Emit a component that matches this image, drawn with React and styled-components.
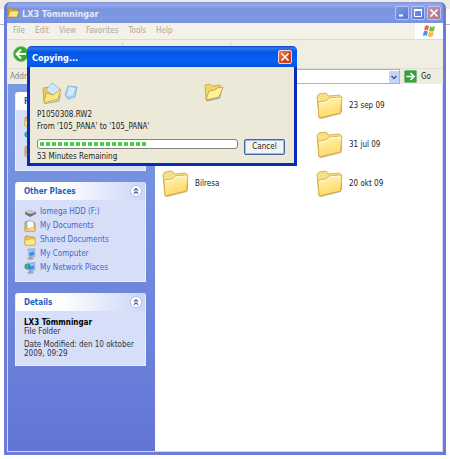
import React from "react";
import styled, { createGlobalStyle } from "styled-components";

const Global = createGlobalStyle`
  * { box-sizing: border-box; }
  body { margin: 0; }
  body, button, input {
    font-family: "DejaVu Sans Condensed", "DejaVu Sans", "Noto Sans", sans-serif;
    font-size: 8px;
    line-height: 10px;
    color: #222;
  }
`;

const Desktop = styled.div`
  position: relative;
  min-height: 100vh;
  padding: 2px 4px 4px;
  display: flex;
  background: linear-gradient(#edebe2 0 9px, #fff 9px 24px, #a9b5c8 24px 25px, #fff 25px);
`;

const ExplorerWindow = styled.main`
  flex: 1;
  min-width: 0;
  display: flex;
  flex-direction: column;
  border: 3px solid #6d7bd9;
  border-top: 0;
  border-radius: 6px 6px 0 0;
  background: #7a96e0;
`;

const TitleBar = styled.header`
  height: 21px;
  flex: none;
  display: flex;
  align-items: center;
  gap: 2px;
  padding-right: 2px;
  border-radius: 6px 6px 0 0;
  background: linear-gradient(#8795dc 0, #94aaec 3px, #7b94df 7px, #7e9ae4 16px, #7b90dc 100%);
`;

const WindowTitle = styled.h1`
  flex: 1;
  margin: 0;
  padding-top: 2px;
  font-size: 9px;
  line-height: 12px;
  color: #e3eafb;
`;

const CaptionButton = styled.button`
  width: 14px;
  height: 14px;
  padding: 0;
  display: grid;
  place-items: center;
  border: 1px solid ${(p) => (p.$live ? "#f6d5cb" : "#b5c4f2")};
  border-radius: 2px;
  background: ${(p) =>
    p.$live
      ? "linear-gradient(135deg, #f08a68, #dc4622 50%, #c93a17)"
      : p.$close
      ? "linear-gradient(135deg, #c493a9, #af7087)"
      : "linear-gradient(135deg, #7c98e9, #5476d8)"};
`;

const MenuBar = styled.nav`
  height: 17px;
  flex: none;
  display: flex;
  align-items: stretch;
  padding-left: 1px;
  background: #f3f1e8;
  border-bottom: 1px solid #dedbd0;
`;

const MenuItem = styled.button`
  padding: 0 5px;
  border: 0;
  background: none;
  color: #aaa99f;
`;

const FlagBox = styled.div`
  width: 28px;
  margin-left: auto;
  display: grid;
  place-items: center;
  background: #fff;
`;

const Toolbar = styled.div`
  height: 28px;
  flex: none;
  display: flex;
  align-items: center;
  padding-left: 6px;
  background: #f0eee3;
`;

const ToolButton = styled.button`
  padding: 0;
  border: 0;
  background: none;
  display: flex;
`;

const Separator = styled.span`
  width: 1px;
  height: 22px;
  margin-left: ${(p) => p.$gap}px;
  background: #d3d0c3;
`;

const AddressBar = styled.form`
  height: 16px;
  flex: none;
  display: flex;
  align-items: center;
  gap: 4px;
  padding: 0 12px 0 3px;
  background: #efede2;
  border-top: 1px solid #e0ddd1;
  label { color: #85847c; }
`;

const AddressField = styled.div`
  flex: 1;
  height: 15px;
  display: flex;
  align-items: center;
  background: #fff;
  border: 1px solid #9db4d2;
  input { flex: 1; min-width: 0; height: 12px; padding: 0 2px; border: 0; outline: 0; }
`;

const DropButton = styled.button`
  width: 10px;
  height: 12px;
  padding: 0;
  display: grid;
  place-items: center;
  border: 0;
  border-radius: 1px;
  background: #c5d5fa;
`;

const GoButton = styled.button`
  padding: 0;
  border: 0;
  background: none;
  display: flex;
  align-items: center;
  gap: 4px;
`;

const Body = styled.div`
  flex: 1;
  display: flex;
  border: 1px solid #c9d6f5;
  border-top: 0;
`;

const Sidebar = styled.aside`
  width: 147px;
  flex: none;
  padding: 8px 9px 12px 7px;
  display: flex;
  flex-direction: column;
  gap: 11px;
  background: linear-gradient(#7a9ae2, #6a80da 75%, #6275d6);
`;

const Panel = styled.section`
  min-height: ${(p) => p.$min}px;
  border-radius: 3px 3px 0 0;
  background: #d7dff8;
  border: 1px solid #e9eefc;
  border-top: 0;
`;

const PanelHeader = styled.div`
  height: 18px;
  display: flex;
  align-items: center;
  justify-content: space-between;
  padding: 0 3px 0 8px;
  border-radius: 3px 3px 0 0;
  background: linear-gradient(90deg, #fff 35%, #cad6f7);
`;

const PanelTitle = styled.h2`
  margin: 0;
  padding-top: 2px;
  font-size: 8px;
  line-height: 10px;
  color: #215dc6;
`;

const Collapse = styled.button`
  width: 12px;
  height: 12px;
  padding: 0;
  display: grid;
  place-items: center;
  border: 1px solid #b5c1df;
  border-radius: 50%;
  background: #fff;
`;

const PlaceList = styled.ul`
  list-style: none;
  margin: 0;
  padding: 5px 8px;
`;

const PlaceLink = styled.a`
  height: 14px;
  display: flex;
  align-items: center;
  gap: 4px;
  color: #3c68cc;
  text-decoration: none;
  white-space: nowrap;
  svg { flex: none; }
`;

const DetailText = styled.div`
  padding: 7px 8px 6px;
  line-height: 9px;
  color: #30323a;
  p { margin: 0 0 4px; }
  strong { display: block; color: #000; }
`;

const FileArea = styled.section`
  flex: 1;
  display: grid;
  grid-template-columns: 154px 1fr;
  grid-auto-rows: 39px;
  align-content: start;
  padding: 2px 0 0 7px;
  background: #fff;
`;

const FileItem = styled.a`
  grid-column: ${(p) => p.$col};
  grid-row: ${(p) => p.$row};
  display: flex;
  align-items: center;
  gap: 5px;
  color: #222;
  text-decoration: none;
`;

const Dialog = styled.div`
  position: absolute;
  left: 27px;
  top: 46px;
  width: 270px;
  border: 3px solid #0b2bb9;
  border-top: 0;
  border-radius: 5px 5px 0 0;
  background: #ece9d8;
`;

const DialogTitle = styled.div`
  height: 21px;
  margin: 0 -3px;
  padding: 0 5px;
  display: flex;
  align-items: center;
  justify-content: space-between;
  border-radius: 5px 5px 0 0;
  background: linear-gradient(#0a43c9 0, #2b7af3 2px, #0356e5 6px, #0560f5 15px, #0455e0 100%);
  h2 { margin: 0; padding-top: 3px; font-size: 9px; line-height: 12px; color: #fff; }
`;

const DialogBody = styled.div`
  padding: 15px 9px 1px 7px;
`;

const CopyArt = styled.div`
  display: flex;
  justify-content: space-between;
  padding: 0 61px 0 5px;
`;

const FileName = styled.p`
  margin: 5px 0 6px;
  line-height: 12px;
`;

const ProgressRow = styled.div`
  display: flex;
  align-items: flex-start;
  gap: 6px;
`;

const ProgressColumn = styled.div`
  flex: 1;
  display: flex;
  flex-direction: column;
  gap: 3px;
`;

const Track = styled.div`
  height: 10px;
  padding: 2px;
  border: 1px solid #85857f;
  border-radius: 3px;
  background: #fff;
`;

const Fill = styled.div`
  height: 4px;
  background: repeating-linear-gradient(90deg, #45d345 0 4px, #fff 4px 6px);
`;

const CancelButton = styled.button`
  width: 41px;
  height: 16px;
  padding: 0;
  border: 1px solid #3f66a8;
  border-radius: 2px;
  background: #f5f4ee;
  box-shadow: inset 0 0 0 1px #9cbcf0;
`;

const Cross = () => (
  <svg width="10" height="10" viewBox="0 0 10 10"><path d="M1.500 1.500l7 7M8.500 1.500l-7 7" stroke="#fff" strokeWidth="1.700" /></svg>
);

const Folder = () => (
  <svg width="28" height="28" viewBox="0 0 28 28">
    <defs>
      <linearGradient id="folderFace" x1="0" y1="0" x2="0.300" y2="1">
        <stop stopColor="#fff7bb" />
        <stop offset="1" stopColor="#ffd966" />
      </linearGradient>
    </defs>
    <path d="M3 26l21-6 2-13-1 15-20 5z" fill="#9b8d62" opacity=".6" />
    <path d="M1 4.500L3 2l7-1 2.500 3 11-1 2 2v15L3 25.500z" fill="#f7df83" stroke="#cda542" strokeWidth=".8" />
    <path d="M2 10l8-1 3-3 13-1-1.500 16L3 26z" fill="url(#folderFace)" stroke="#d1a83e" strokeWidth=".8" />
    <path d="M3 11l7.500-1 3-3L25 6" fill="none" stroke="#fffce0" />
  </svg>
);

const OpenFolder = () => (
  <svg width="20" height="20" viewBox="0 0 20 20">
    <path d="M2 18.500l13-3 4-11-3 12-13 3z" fill="#77735c" opacity=".6" />
    <path d="M1 3l5-1 2 2 8-1v10L2 18z" fill="#f3d567" stroke="#c8a33e" strokeWidth=".8" />
    <path d="M2 18l3-9 6-1 2-2 6-1-4 10z" fill="#fff09a" stroke="#be9d42" strokeWidth=".8" />
  </svg>
);

const CopySource = () => (
  <svg width="38" height="22" viewBox="0 0 38 22">
    <path d="M2 21.500l14-3 4-9-3 10-14 2.500z" fill="#77735c" opacity=".6" />
    <path d="M1 6l5-1 2 2 9-1v10L2 20z" fill="#efcb58" stroke="#c49c37" strokeWidth=".8" />
    <path d="M4 8l6-7 8 6-4 8z" fill="#cce8fb" stroke="#87b8dd" strokeWidth=".8" />
    <path d="M2 21l2-10 7 2 8-6-3 10z" fill="#ffe681" stroke="#c5a043" strokeWidth=".8" />
    <path d="M26 4l9 1-2 10-7 2-3-4z" fill="#a9d0f5" stroke="#79aadd" strokeWidth=".8" />
    <path d="M27 5l6 1-2 7-6 1z" fill="#d5ebfd" />
  </svg>
);

const Flag = () => (
  <svg width="14" height="14" viewBox="0 0 14 14">
    <path d="M3 2q2-1.500 4 0L6 6.500q-2-1.500-4 0z" fill="#ed673d" />
    <path d="M8 2.200q2 1.300 5 0L12 7q-3 1-5 0z" fill="#7bbd42" />
    <path d="M1.800 7.500q2-1.300 4 0L4.800 12q-2-1.500-4 0z" fill="#4c8ddd" />
    <path d="M6.800 7.800q2 1.300 5 0l-1 4.500q-3 1-5 0z" fill="#f4bd38" />
  </svg>
);

const Chevrons = () => (
  <svg width="8" height="8" viewBox="0 0 8 8">
    <path d="M2 3.700l2-2 2 2M2 6.700l2-2 2 2" fill="none" stroke="#23417f" strokeWidth="1.100" />
  </svg>
);

const ArrowBox = () => (
  <svg width="13" height="13" viewBox="0 0 13 13">
    <rect x=".5" y=".5" width="12" height="12" rx="1" fill="#35a13b" stroke="#7fb983" />
    <path d="M2.500 6.500h7M6.500 3l3.500 3.500L6.500 10" fill="none" stroke="#fff" strokeWidth="1.700" />
  </svg>
);

const Drive = () => (
  <svg width="12" height="12" viewBox="0 0 12 12">
    <path d="M1 6l5-2 6 2v2l-6 3-5-3z" fill="#707174" />
    <path d="M1 6l5-2 6 2-6 2z" fill="#c9c9ca" />
    <path d="M9 8h1" stroke="#8cda70" />
  </svg>
);

const Documents = () => (
  <svg width="12" height="12" viewBox="0 0 12 12">
    <path d="M1 2l4-1 6 2v8H1z" fill="#eebd45" stroke="#b88a2b" strokeWidth=".8" />
    <path d="M3 1h5l2 2v6H3z" fill="#f9fcff" stroke="#7ba6d6" strokeWidth=".8" />
    <path d="M1 9h4l1-1h5v3H1z" fill="#ffe187" stroke="#c3973a" strokeWidth=".6" />
  </svg>
);

const SharedFolder = () => (
  <svg width="12" height="12" viewBox="0 0 12 12">
    <path d="M1 3l1-1h3l1 1h4l1 2v6H1z" fill="#ecc24c" stroke="#b58e36" strokeWidth=".8" />
    <path d="M1 6h4l1-1h5v6H1z" fill="#ffe884" stroke="#d1a441" strokeWidth=".5" />
  </svg>
);

const Computer = ({ globe }) => (
  <svg width="12" height="12" viewBox="0 0 12 12">
    <path d="M4 1l7-.5v8L5 9z" fill="#b3c5de" stroke="#849ab9" strokeWidth=".5" />
    <path d="M5 2l5-.5v5.500L5.500 8z" fill="#348bea" />
    <path d="M5 2l5-.5v2L5 5z" fill="#88c7fa" />
    <path d="M5 9l3-.5 2 2.500-4 1-3-1z" fill="#9aa5b4" />
    {globe && <circle cx="3.500" cy="4.500" r="3" fill="#2c87cf" />}
    {globe && <path d="M1 4q1-3 4-2L4 4l1 2-2 1z" fill="#45b758" />}
  </svg>
);

const places = [
  ["Iomega HDD (F:)", <Drive />],
  ["My Documents", <Documents />],
  ["Shared Documents", <SharedFolder />],
  ["My Computer", <Computer />],
  ["My Network Places", <Computer globe />],
];

const tasks = [<SharedFolder />, <Computer globe />, <Documents />];

const folders = [
  ["23 sep 09", 2, 1],
  ["31 jul 09", 2, 2],
  ["Bilresa", 1, 3],
  ["20 okt 09", 2, 3],
];

function SidePanel({ title, min, children }) {
  return (
    <Panel $min={min}>
      <PanelHeader>
        <PanelTitle>{title}</PanelTitle>
        <Collapse aria-label="Collapse"><Chevrons /></Collapse>
      </PanelHeader>
      {children}
    </Panel>
  );
}

export default function App() {
  return (
    <Desktop>
      <Global />
      <ExplorerWindow>
        <TitleBar>
          <svg width="13" height="13" viewBox="0 0 13 13">
            <path d="M1 11V3l1-1h3l1 1h5v8z" fill="#d9a835" stroke="#8c7c46" strokeWidth=".6" />
            <path d="M1 11l2-6h9l-2 6z" fill="#ffe680" stroke="#a58a43" strokeWidth=".6" />
          </svg>
          <WindowTitle>LX3 Tömmningar</WindowTitle>
          <CaptionButton aria-label="Minimize">
            <svg width="10" height="10"><path d="M2 7.500h4" stroke="#fff" strokeWidth="2" /></svg>
          </CaptionButton>
          <CaptionButton aria-label="Maximize">
            <svg width="10" height="10"><path d="M1.500 2v6.500h7V2" fill="none" stroke="#fff" /><path d="M1 2h8" stroke="#fff" strokeWidth="2" /></svg>
          </CaptionButton>
          <CaptionButton $close aria-label="Close"><Cross /></CaptionButton>
        </TitleBar>
        <MenuBar>
          {["File", "Edit", "View", "Favorites", "Tools", "Help"].map((m) => (
            <MenuItem key={m}>{m}</MenuItem>
          ))}
          <FlagBox><Flag /></FlagBox>
        </MenuBar>
        <Toolbar>
          <ToolButton aria-label="Back">
            <svg width="16" height="16" viewBox="0 0 16 16">
              <circle cx="8" cy="8" r="7.500" fill="#39a932" stroke="#85c47e" />
              <path d="M13 8H4M8 3.500L3.500 8 8 12.500" fill="none" stroke="#fff" strokeWidth="2" />
            </svg>
          </ToolButton>
          <Separator $gap={93} />
          <Separator $gap={107} />
        </Toolbar>
        <AddressBar onSubmit={(e) => e.preventDefault()}>
          <label htmlFor="address">Address</label>
          <AddressField>
            <input id="address" />
            <DropButton type="button" aria-label="Show addresses">
              <svg width="8" height="8"><path d="M1.500 3L4 5.500 6.500 3" fill="none" stroke="#40587f" strokeWidth="1.500" /></svg>
            </DropButton>
          </AddressField>
          <GoButton type="submit"><ArrowBox />Go</GoButton>
        </AddressBar>
        <Body>
          <Sidebar>
            <SidePanel title="File and Folder Tasks" min={79}>
              <PlaceList>
                {tasks.map((icon, i) => <li key={i}>{icon}</li>)}
              </PlaceList>
            </SidePanel>
            <SidePanel title="Other Places" min={100}>
              <PlaceList>
                {places.map(([name, icon]) => (
                  <li key={name}><PlaceLink href="#">{icon}{name}</PlaceLink></li>
                ))}
              </PlaceList>
            </SidePanel>
            <SidePanel title="Details" min={73}>
              <DetailText>
                <p><strong>LX3 Tömmningar</strong>File Folder</p>
                Date Modified: den 10 oktober 2009, 09:29
              </DetailText>
            </SidePanel>
          </Sidebar>
          <FileArea>
            {folders.map(([name, col, row]) => (
              <FileItem key={name} href="#" $col={col} $row={row}><Folder />{name}</FileItem>
            ))}
          </FileArea>
        </Body>
      </ExplorerWindow>
      <Dialog role="dialog" aria-labelledby="copy-title">
        <DialogTitle>
          <h2 id="copy-title">Copying...</h2>
          <CaptionButton $live aria-label="Close"><Cross /></CaptionButton>
        </DialogTitle>
        <DialogBody>
          <CopyArt><CopySource /><OpenFolder /></CopyArt>
          <FileName>P1050308.RW2<br />From '105_PANA' to '105_PANA'</FileName>
          <ProgressRow>
            <ProgressColumn>
              <Track role="progressbar" aria-label="Copy progress" aria-valuenow={55}>
                <Fill style={{ width: "55%" }} />
              </Track>
              <span>53 Minutes Remaining</span>
            </ProgressColumn>
            <CancelButton>Cancel</CancelButton>
          </ProgressRow>
        </DialogBody>
      </Dialog>
    </Desktop>
  );
}
